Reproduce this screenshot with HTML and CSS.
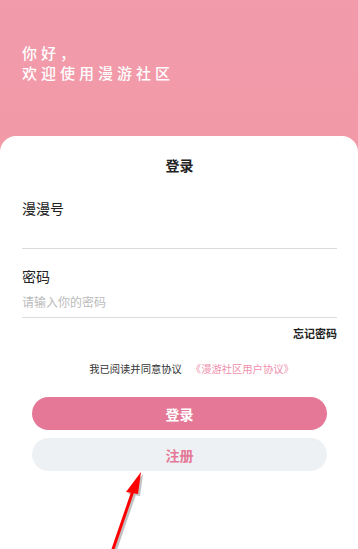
FILE: index.html
```html
<!DOCTYPE html>
<html lang="zh-CN">

<head>
    <meta charset="UTF-8">
    <meta name="viewport" content="width=device-width, initial-scale=1.0">
    <title>登录</title>
    <link rel="stylesheet" href="styles.css">
</head>

<body>
    <div class="page">
        <div class="head">
            <div class="hello">你好，</div>
            <div class="hello">欢迎使用漫游社区</div>
        </div>
        <div class="card">
            <div class="title">登录</div>
            <div class="field">
                <div class="label">漫漫号</div>
                <div class="input"></div>
            </div>
            <div class="field">
                <div class="label">密码</div>
                <div class="input placeholder">请输入你的密码</div>
            </div>
            <div class="forget">忘记密码</div>
            <div class="agree">我已阅读并同意协议<span>《漫游社区用户协议》</span></div>
            <div class="btns">
                <button class="btn login">登录</button>
                <button class="btn reg">注册</button>
            </div>
        </div>
        <!-- 标注箭头 -->
        <svg class="arrow" width="358" height="549" viewBox="0 0 358 549">
            <g transform="translate(2,2)" fill="#777" stroke="#777" opacity="0.45">
                <line x1="112" y1="552" x2="134" y2="488" stroke-width="3" />
                <polygon points="141,472 126,492 138,494" stroke="none" />
            </g>
            <line x1="112" y1="552" x2="134" y2="488" stroke="#ff0000" stroke-width="3" />
            <polygon points="141,472 126,492 138,494" fill="#ff0000" />
        </svg>
    </div>
</body>

</html>
```

FILE: styles.css
```css
body {
    margin: 0;
    font-family: "Noto Sans CJK SC", "Noto Sans", sans-serif;
}

.page {
    width: 358px;
    height: 549px;
    overflow: hidden;
    position: relative;
    background: linear-gradient(180deg, #f19bab 0%, #f8959c 100%);
}

.head {
    height: 136px;
    box-sizing: border-box;
    padding: 43px 0 0 22px;
}

.hello {
    color: #fff;
    font-size: 15px;
    font-weight: 500;
    line-height: 20px;
    height: 20px;
    letter-spacing: 4px;
}

.card {
    height: 413px;
    background-color: #fff;
    border-radius: 16px 16px 0 0;
    box-sizing: border-box;
    padding: 0 21px 0 22px;
}

.title {
    text-align: center;
    font-size: 14px;
    font-weight: 700;
    color: #222;
    padding-top: 19px;
    line-height: 20px;
}

.field {
    margin-top: 23px;
}

.field + .field {
    margin-top: 17px;
}

.label {
    font-size: 14px;
    line-height: 20px;
    color: #222;
}

.input {
    height: 30px;
    border-bottom: 1px solid #dcdcdc;
}

.placeholder {
    font-size: 12px;
    color: #bbb;
    line-height: 18px;
    height: 24px;
    padding-top: 7px;
}

.forget {
    text-align: right;
    font-size: 11px;
    font-weight: 700;
    color: #222;
    line-height: 16px;
    margin-top: 7px;
}

.agree {
    text-align: center;
    font-size: 10.3px;
    color: #333;
    margin-top: 20px;
    padding-left: 24px;
    line-height: 16px;
}

.agree span {
    color: #ef8fad;
    margin-left: 9px;
}

.btns {
    display: flex;
    flex-direction: column;
    gap: 8px;
    padding: 0 10px;
    margin-top: 20px;
}

.btn {
    border: none;
    height: 33px;
    border-radius: 17px;
    font-family: inherit;
    font-size: 14px;
    font-weight: 700;
    cursor: pointer;
}

.btn.login {
    background-color: #e47896;
    color: #fff;
}

.btn.reg {
    background-color: #eef1f4;
    color: #e47896;
}

.arrow {
    position: absolute;
    top: 0;
    left: 0;
    pointer-events: none;
}
```
